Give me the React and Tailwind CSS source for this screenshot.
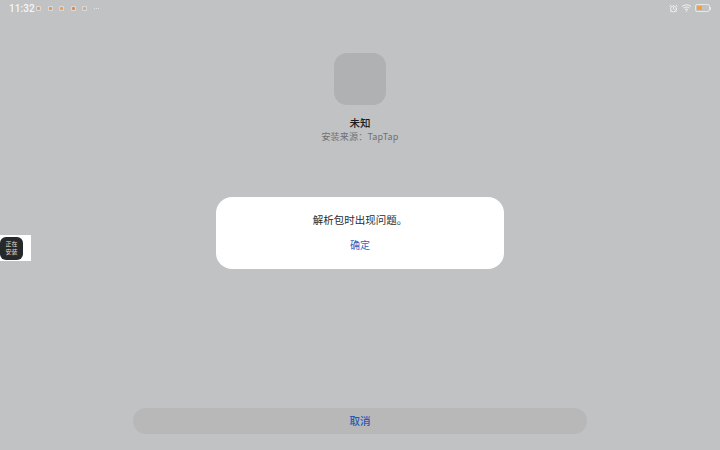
import { AlarmClock } from 'lucide-react';

const cjk = { fontFamily: '"Noto Sans CJK SC", "Noto Sans", sans-serif' };

function NotifIcon({ color }) {
    return (
        <span className="w-[5px] h-[5px] rounded-[1px] bg-[#d8d8d8] flex items-center justify-center">
            <span className="w-[3px] h-[3px] rounded-[1px]" style={{ backgroundColor: color }}></span>
        </span>
    );
}

function StatusBar() {
    const notifs = ['#e0a060', '#dd9a55', '#e0a060', '#d98a50', '#d9a58a'];
    return (
        <div className="h-4 flex items-center justify-between pl-[9px] pr-[9px] text-[#f6f6f6]">
            <div className="flex items-center">
                <span className="text-[10px] font-medium tracking-[0.1px] w-[27px]" style={{ fontFamily: '"Roboto", sans-serif' }}>11:32</span>
                <div className="flex items-center gap-[6.5px]">
                    {notifs.map((c, i) => <NotifIcon key={i} color={c} />)}
                    <span className="flex gap-[1px]">
                        <span className="w-[1px] h-[1px] bg-[#e4e4e4]"></span>
                        <span className="w-[1px] h-[1px] bg-[#e4e4e4]"></span>
                        <span className="w-[1px] h-[1px] bg-[#e4e4e4]"></span>
                    </span>
                </div>
            </div>
            <div className="flex items-center gap-[3px]">
                <AlarmClock size={9} strokeWidth={2.5} color="#f2f2f2" />
                <svg width="11" height="8" viewBox="0 0 10 8">
                    <path d="M0.5 2.5 Q5 -1 9.5 2.5 M2 4 Q5 1.8 8 4 M3.5 5.5 Q5 4.5 6.5 5.5" fill="none" stroke="#f2f2f2" strokeWidth="1" />
                    <circle cx="5" cy="7" r="0.8" fill="#f2f2f2" />
                </svg>
                <div className="flex items-center">
                    <div className="w-[15px] h-[8px] rounded-[2px] border border-[#e6e6e6] p-[1px]">
                        <div className="w-[5px] h-full bg-[#f0a040] rounded-[1px]"></div>
                    </div>
                    <div className="w-[1px] h-[3px] bg-[#e6e6e6]"></div>
                </div>
            </div>
        </div>
    );
}

export default function App() {
    return (
        <div className="relative w-[720px] h-[450px] overflow-hidden bg-[#c1c2c4] flex flex-col" style={cjk}>
            <StatusBar />
            <div className="flex-1 flex flex-col items-center">
                <div className="mt-[37px] w-[52px] h-[52px] rounded-[13px] bg-[#b0b1b3]"></div>
                <div className="mt-[10px] text-[10.5px] leading-[15px] font-medium text-[#1c1c1c]">未知</div>
                <div className="text-[9px] leading-[13px] text-[#707172] tracking-[0.2px]">安装来源：TapTap</div>
            </div>
            <div className="flex justify-center pb-4">
                <button className="w-[454px] h-[26px] rounded-[13px] bg-[#b7b8b7] text-[10.5px] font-medium text-[#2a58b8]">取消</button>
            </div>

            {/* dialog */}
            <div className="absolute left-[216px] top-[197px] w-[288px] h-[72px] rounded-[16px] bg-white flex flex-col items-center">
                <div className="mt-[15px] text-[10.5px] leading-[16px] text-[#2c2c2c]">解析包时出现问题。</div>
                <div className="mt-[9px] text-[10px] leading-[16px] text-[#2a62c0]">确定</div>
            </div>

            {/* floating install badge */}
            <div className="absolute left-0 top-[235px] w-[31px] h-[26px] bg-white flex items-center">
                <div className="w-[23px] h-[23px] rounded-[6px] bg-[#26292c] flex flex-col items-center justify-center text-[6px] leading-[8px] text-[#e8dcc8]">
                    <span>正在</span>
                    <span>安装</span>
                </div>
            </div>
        </div>
    );
}
